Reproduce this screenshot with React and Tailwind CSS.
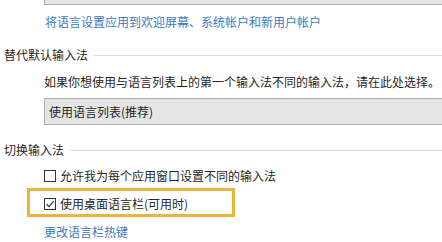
import React from 'react';

const font = { fontFamily: '"Noto Sans CJK SC", "Noto Sans", sans-serif' };

const SectionHeader = ({ title }) => (
    <div className="flex items-center h-[16px] pl-[4px]">
        <span className="text-[#262626] whitespace-nowrap">{title}</span>
        <div className="flex-1 h-px bg-[#dcdcdc] ml-[6px]" />
    </div>
);

const CheckRow = ({ label, checked }) => (
    <div className="flex items-center h-[16px]">
        <span className="w-[12px] h-[12px] border border-[#333333] bg-white flex items-center justify-center shrink-0">
            {checked && (
                <svg width="10" height="10" viewBox="0 0 10 10">
                    <path d="M1.5 5.2 L4 7.6 L8.6 2.2" fill="none" stroke="#333333" strokeWidth="1.2" />
                </svg>
            )}
        </span>
        <span className="ml-[4px] text-[#262626] whitespace-nowrap">{label}</span>
    </div>
);

const App = () => {
    return (
        <div className="w-[442px] h-[242px] bg-white overflow-hidden text-[12px] leading-[16px]" style={font}>
            <div className="ml-[44px] h-[5px] bg-[#e6e6e6] border-l border-b border-[#adadad]" />

            <div className="mt-[9px] pl-[45px] text-[#3a7bbd] whitespace-nowrap">
                将语言设置应用到欢迎屏幕、系统帐户和新用户帐户
            </div>

            <div className="mt-[17px]">
                <SectionHeader title="替代默认输入法" />
            </div>

            <div className="mt-[11px] pl-[44px] text-[#262626] whitespace-nowrap">
                如果你想使用与语言列表上的第一个输入法不同的输入法，请在此处选择。
            </div>

            <div className="mt-[8px] ml-[44px] h-[27px] bg-[#e5e5e5] border border-r-0 border-[#adadad] flex items-center pl-[4px] text-[#262626]">
                使用语言列表(推荐)
            </div>

            <div className="mt-[17px]">
                <SectionHeader title="切换输入法" />
            </div>

            <div className="mt-[10px] pl-[44px]">
                <CheckRow label="允许我为每个应用窗口设置不同的输入法" />
            </div>

            <div className="mt-[4px] ml-[27px] w-[208px] h-[29px] border-[3px] border-[#ebb43c] pt-[5px] pl-[14px]">
                <CheckRow label="使用桌面语言栏(可用时)" checked />
            </div>

            <div className="mt-[7px] pl-[44px] text-[#3a7bbd] whitespace-nowrap">
                更改语言栏热键
            </div>
        </div>
    );
};

export default App;
